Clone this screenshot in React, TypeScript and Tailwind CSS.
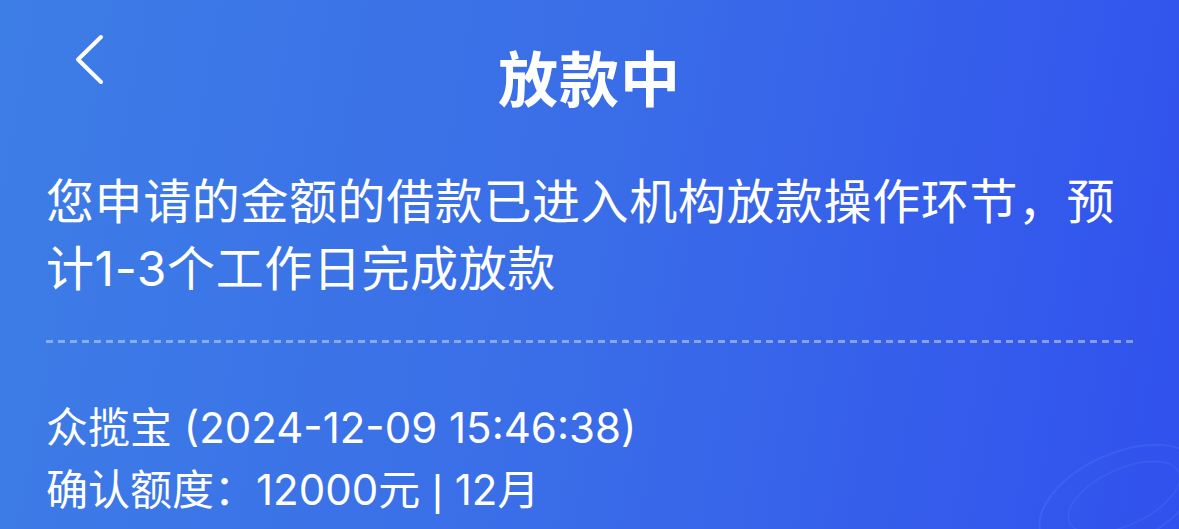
const font = { fontFamily: 'Inter, "Noto Sans CJK SC", sans-serif' };

export default function App() {
  return (
    <div
      className="relative w-full h-[529px] overflow-hidden bg-[linear-gradient(100deg,#3d7de6_0%,#3a6de8_50%,#3151ee_100%)] text-white"
      style={font}
    >
      {/* faint decoration bottom right */}
      <svg className="absolute right-[-30px] bottom-[-40px] opacity-10" width="200" height="160" viewBox="0 0 200 160">
        <ellipse cx="110" cy="90" rx="85" ry="45" transform="rotate(-25 110 90)" fill="none" stroke="#9fb6ff" strokeWidth="2" />
        <ellipse cx="115" cy="88" rx="60" ry="28" transform="rotate(-25 115 88)" fill="none" stroke="#9fb6ff" strokeWidth="1.5" />
      </svg>

      {/* Header */}
      <header className="relative h-[160px] flex items-center justify-center">
        <button className="absolute left-[70px] top-[30px] text-white">
          <svg width="40" height="60" viewBox="0 0 40 60" fill="none">
            <polyline points="31,7 8,29.5 31,52" stroke="currentColor" strokeWidth="4" strokeLinecap="round" strokeLinejoin="round" />
          </svg>
        </button>
        <h1 className="text-[60px] font-bold leading-none tracking-[1px]">放款中</h1>
      </header>

      {/* Body */}
      <main className="px-[46px]">
        <p className="text-[48px] leading-[67px] tracking-[0.6px] mt-[8px]">
          您申请的金额的借款已进入机构放款操作环节，预计1-3个工作日完成放款
        </p>

        <div className="mt-[38px] h-[3px] bg-[repeating-linear-gradient(90deg,rgba(200,215,255,0.55)_0_7px,transparent_7px_12px)]" />

        <div className="mt-[54px] text-[42px] leading-[62px]">
          <div>众揽宝 (2024-12-09 15:46:38)</div>
          <div>
            确认额度：12000元 <span className="font-['Liberation_Sans',sans-serif]">|</span> 12月
          </div>
        </div>
      </main>
    </div>
  );
}
